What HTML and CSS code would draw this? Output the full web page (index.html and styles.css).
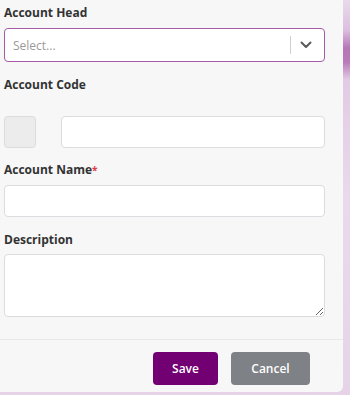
FILE: index.html
```html
<!DOCTYPE html>
<html>
<head>
<meta charset="utf-8">
<link rel="stylesheet" href="styles.css">
</head>
<body>
<div class="panel">
  <form class="form">
    <label class="label l1">Account Head</label>
    <div class="select">
      <span class="placeholder">Select...</span>
      <span class="sep"></span>
      <svg class="chev" width="12" height="8" viewBox="0 0 12 8"><path d="M1.5 1.5 L6 6 L10.5 1.5" fill="none" stroke="#5a5a5a" stroke-width="2" stroke-linecap="round" stroke-linejoin="round"/></svg>
    </div>
    <label class="label l2">Account Code</label>
    <div class="code-row">
      <div class="prefix"></div>
      <input class="input code" type="text">
    </div>
    <label class="label l3">Account Name<span class="req">*</span></label>
    <input class="input name" type="text">
    <label class="label l4">Description</label>
    <textarea class="textarea"></textarea>
  </form>
  <div class="footer">
    <button class="btn save" type="button">Save</button>
    <button class="btn cancel" type="button">Cancel</button>
  </div>
</div>
</body>
</html>
```

FILE: styles.css
```css
html, body {
  margin: 0;
  padding: 0;
  height: 395px;
  overflow: hidden;
}
body {
  width: 350px;
  font-family: "Open Sans", "Liberation Sans", sans-serif;
  background: linear-gradient(to bottom, #e9d9ec 0px, #dcbfe0 30px, #b676b8 48px, #b87ab9 62px, #e2cbe5 80px, #ead9ec 200px, #e6d3e8 395px);
}
.panel {
  width: 343px;
  height: 392px;
  background: #f7f7f7;
  border-bottom-right-radius: 6px;
  display: flex;
  flex-direction: column;
}
.form {
  display: flex;
  flex-direction: column;
  padding: 0 18px 0 4px;
}
.label {
  font-size: 12px;
  font-weight: 700;
  color: #333333;
  line-height: 16px;
  height: 16px;
}
.l1 { margin-top: 5px; margin-bottom: 7px; }
.l2 { margin-top: 15px; margin-bottom: 23px; }
.l3 { margin-top: 14px; margin-bottom: 7px; }
.l4 { margin-top: 15px; margin-bottom: 6px; }
.req { color: #e0394a; font-size: 10px; vertical-align: top; }
.select {
  box-sizing: border-box;
  height: 34px;
  border: 1px solid #a65ba8;
  border-radius: 4px;
  background: #fff;
  display: flex;
  align-items: center;
  padding: 0 12px 0 8px;
}
.placeholder {
  flex: 1;
  font-size: 12px;
  color: #9a9a9a;
}
.sep {
  width: 1px;
  height: 18px;
  background: #cfcfcf;
  margin-right: 9px;
}
.chev { display: block; }
.code-row {
  display: flex;
  gap: 25px;
}
.prefix {
  box-sizing: border-box;
  width: 32px;
  height: 32px;
  border: 1px solid #dcdcdc;
  border-radius: 4px;
  background: #ececec;
}
.input {
  box-sizing: border-box;
  height: 32px;
  border: 1px solid #dcdce0;
  border-radius: 4px;
  background: #fff;
  margin: 0;
  padding: 0 8px;
  outline: none;
}
.code { flex: 1; }
.name { width: 100%; }
.textarea {
  box-sizing: border-box;
  width: 100%;
  height: 63px;
  border: 1px solid #dcdce0;
  border-radius: 4px;
  background: #fff;
  margin: 0;
  outline: none;
}
.footer {
  margin-top: 22px;
  border-top: 1px solid #e8e8e8;
  display: flex;
  justify-content: flex-end;
  gap: 13px;
  padding: 12px 33px 0 0;
}
.btn {
  height: 33px;
  border: none;
  border-radius: 4px;
  color: #fff;
  font-family: "Open Sans", "Liberation Sans", sans-serif;
  font-size: 12px;
  font-weight: 600;
  padding: 0;
}
.save { width: 65px; background: #720072; }
.cancel { width: 79px; background: #7e8185; }
```
